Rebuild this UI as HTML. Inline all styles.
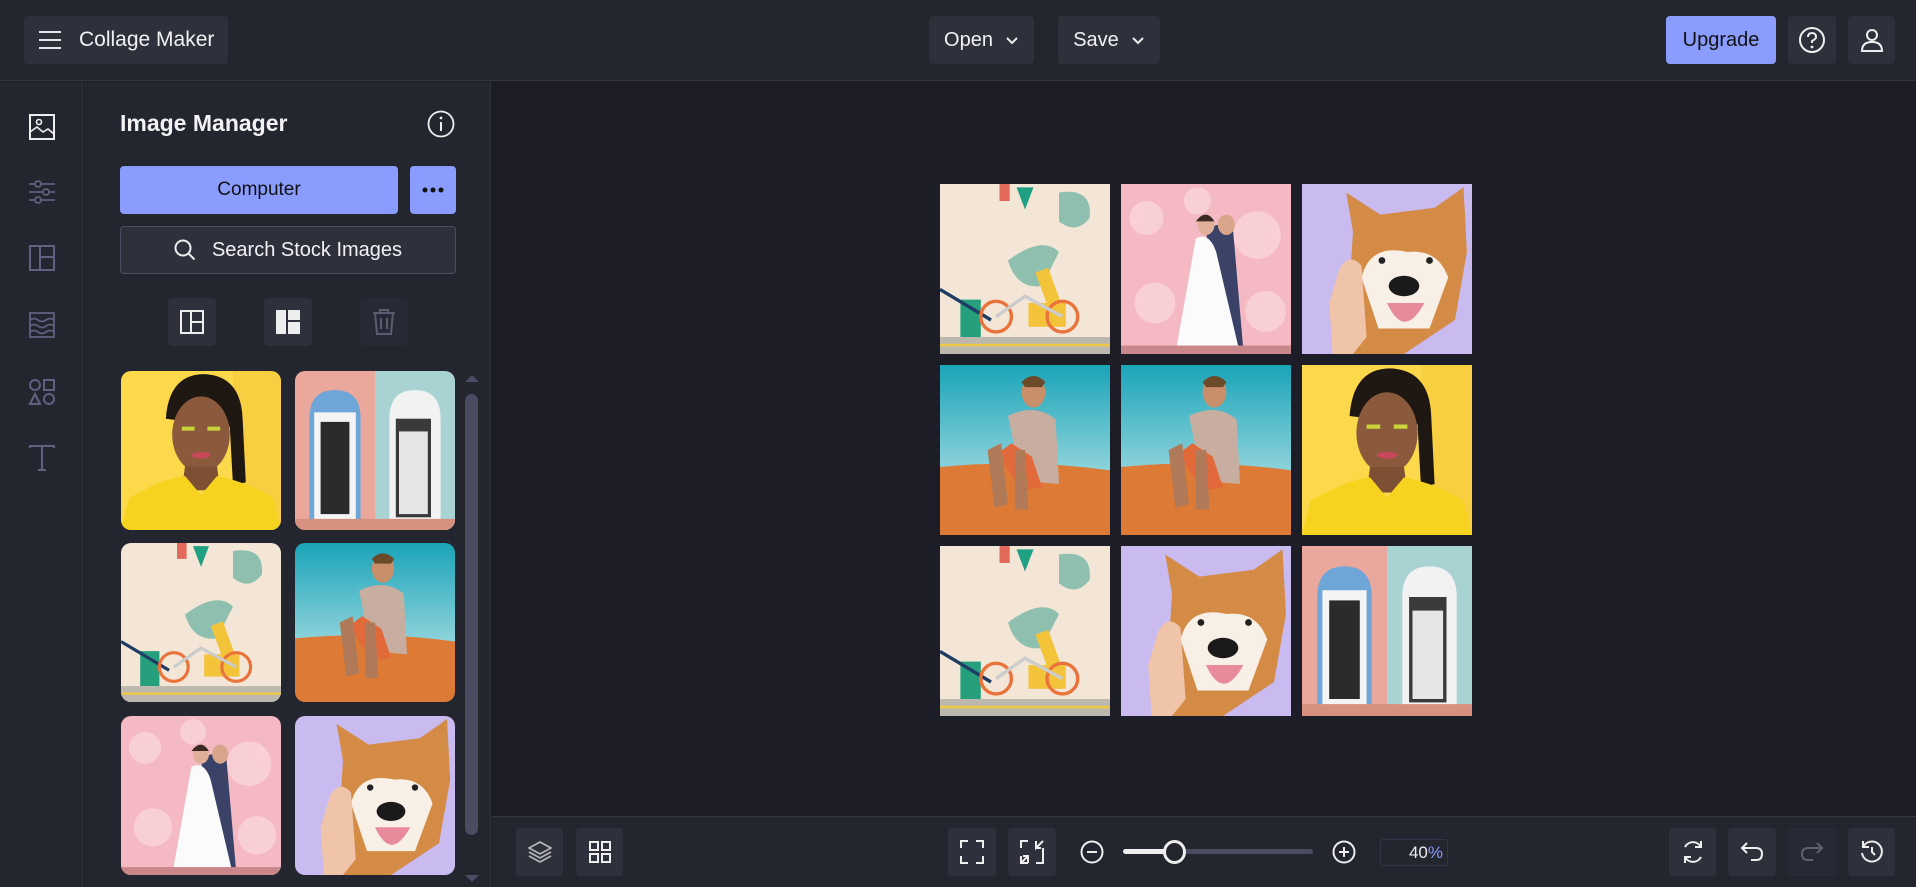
<!DOCTYPE html>
<html><head><meta charset="utf-8">
<style>
*{box-sizing:border-box;margin:0;padding:0}
body{width:1916px;height:887px;background:#1c1d26;font-family:"Liberation Sans",sans-serif;color:#fff;position:relative;overflow:hidden}
.abs{position:absolute}
.top{left:0;top:0;width:1916px;height:81px;background:#23252f;border-bottom:1px solid #343644}
.btn{position:absolute;background:#2e303c;border-radius:4px;display:flex;align-items:center;justify-content:center;font-size:20px;color:#f2f2f5}
.rail{left:0;top:82px;width:83px;height:805px;background:#23252f;border-right:1px solid #30323e}
.panel{left:84px;top:82px;width:407px;height:805px;background:#23252f;border-right:1px solid #30323e}
.bottom{left:492px;top:816px;width:1424px;height:71px;background:#23252f;border-top:1px solid #343644}
svg{display:block}
.cell{position:absolute;width:170px;height:170px}
.th{position:absolute;width:160px;height:159px;border-radius:10px;overflow:hidden}
</style></head><body>
<svg width="0" height="0" style="position:absolute">
<defs>
<symbol id="woman" viewBox="0 0 100 100" preserveAspectRatio="none">
<rect width="100" height="100" fill="#fbd94a"/><rect x="70" width="30" height="100" fill="#f7c83a" opacity=".6"/>
<path d="M28 30 Q30 2 52 2 Q75 3 76 30 L78 70 L70 72 L68 35Z" fill="#1f1712"/>
<ellipse cx="50" cy="40" rx="18" ry="24" fill="#8b5a3c"/>
<path d="M40 60 L60 60 L62 75 L38 75Z" fill="#7d4f33"/>
<path d="M0 100 L5 80 Q25 68 40 66 L50 78 L60 66 Q80 70 95 80 L100 100Z" fill="#f6d31e"/>
<ellipse cx="50" cy="53" rx="6" ry="2" fill="#c8485a"/>
<rect x="38" y="35" width="8" height="2.5" fill="#c9d43a"/><rect x="54" y="35" width="8" height="2.5" fill="#c9d43a"/>
</symbol>
<symbol id="doors" viewBox="0 0 100 100" preserveAspectRatio="none">
<rect width="50" height="100" fill="#eaa79c"/><rect x="50" width="50" height="100" fill="#a9d3d3"/>
<path d="M9 95 V30 Q9 12 25 12 Q41 12 41 30 V95Z" fill="#6ea6d8"/>
<rect x="12" y="26" width="26" height="68" fill="#f4f4f4"/><rect x="16" y="32" width="18" height="58" fill="#2b2b2b"/>
<path d="M59 95 V30 Q59 12 75 12 Q91 12 91 30 V95Z" fill="#f2f2f2"/>
<rect x="63" y="30" width="22" height="62" fill="#3a3a3a"/><rect x="65" y="38" width="18" height="52" fill="#e6e6e6"/>
<rect y="93" width="100" height="7" fill="#d9917f"/>
</symbol>
<symbol id="wall" viewBox="0 0 100 100" preserveAspectRatio="none">
<rect width="100" height="100" fill="#f3e6d6"/>
<path d="M70 5 Q90 2 88 20 Q80 30 70 22Z" fill="#8fbfae"/>
<path d="M40 45 Q60 30 70 40 L60 60 Q45 62 40 45Z" fill="#8fbfae"/>
<rect x="60" y="50" width="8" height="25" fill="#f3c33a" transform="rotate(-20 64 62)"/>
<rect x="52" y="70" width="22" height="14" fill="#f3c33a"/>
<rect x="12" y="68" width="12" height="22" fill="#26a07c"/>
<path d="M0 62 L30 80" stroke="#1e3c66" stroke-width="2"/>
<path d="M45 2 L55 2 L50 15Z" fill="#20a083"/><rect x="35" y="0" width="6" height="10" fill="#e36a5b"/>
<circle cx="33" cy="78" r="9" fill="none" stroke="#e9733a" stroke-width="2"/><circle cx="72" cy="78" r="9" fill="none" stroke="#e9733a" stroke-width="2"/>
<path d="M33 78 L50 66 L72 78" stroke="#ccc" stroke-width="2" fill="none"/>
<rect y="90" width="100" height="10" fill="#bdb8ad"/><rect y="94" width="100" height="1.5" fill="#efc845"/>
</symbol>
<symbol id="man" viewBox="0 0 100 100" preserveAspectRatio="none">
<defs><linearGradient id="sky" x1="0" y1="0" x2="0" y2="1"><stop offset="0" stop-color="#1aa4b8"/><stop offset="1" stop-color="#8ed3db"/></linearGradient></defs>
<rect width="100" height="62" fill="url(#sky)"/>
<path d="M0 60 Q50 55 100 62 V100 H0Z" fill="#dd7a36"/>
<ellipse cx="55" cy="16" rx="7" ry="9" fill="#c98f6a"/><path d="M48 10 Q55 3 62 10 L60 13 L50 13Z" fill="#6b4a2a"/>
<path d="M40 30 Q56 22 68 32 L70 70 L48 68Z" fill="#c8aea0"/>
<path d="M34 52 L42 46 L54 54 L60 72 L48 74 L40 62Z" fill="#e2693a"/>
<path d="M28 50 L36 46 L40 82 L32 84Z" fill="#b07a58"/><path d="M44 50 L50 50 L52 85 L44 85Z" fill="#b07a58"/>
</symbol>
<symbol id="wedding" viewBox="0 0 100 100" preserveAspectRatio="none">
<rect width="100" height="100" fill="#f5b9c3"/>
<g fill="#fbd5db" opacity=".8"><circle cx="15" cy="20" r="10"/><circle cx="80" cy="30" r="14"/><circle cx="20" cy="70" r="12"/><circle cx="85" cy="75" r="12"/><circle cx="45" cy="10" r="8"/></g>
<path d="M50 28 Q58 20 66 28 L72 98 L62 98Z" fill="#3a4268"/>
<ellipse cx="62" cy="24" rx="5" ry="6" fill="#d9a58a"/>
<path d="M44 32 Q52 28 56 40 L70 100 H32Z" fill="#fbfbfb"/>
<ellipse cx="50" cy="24" rx="5" ry="6" fill="#e0b09b"/><path d="M44 22 Q50 14 55 22Z" fill="#3b2a22"/>
<rect y="95" width="100" height="5" fill="#c9878c"/>
</symbol>
<symbol id="dog" viewBox="0 0 100 100" preserveAspectRatio="none">
<rect width="100" height="100" fill="#c9baf0"/>
<path d="M30 28 L26 5 L46 18 L78 14 L95 2 L97 40 L90 80 L60 100 L30 100 L28 60Z" fill="#d48b45"/>
<path d="M35 55 Q40 35 62 40 Q80 38 86 55 L75 85 L45 85Z" fill="#f8efe6"/>
<ellipse cx="60" cy="60" rx="9" ry="6" fill="#1a1a1a"/>
<path d="M50 70 Q60 92 72 70Z" fill="#e78a9a"/>
<circle cx="47" cy="45" r="2" fill="#222"/><circle cx="75" cy="45" r="2" fill="#222"/>
<path d="M22 50 Q28 40 35 48 L38 90 L30 100 L18 100 L16 70Z" fill="#f0c4a8"/>
</symbol>
</defs></svg>

<div class="abs top"></div>
<div class="btn" style="left:24px;top:16px;width:204px;height:48px;justify-content:flex-start;padding-left:14px">
<svg width="24" height="20" viewBox="0 0 24 20"><path d="M1 2H23M1 10H23M1 18H23" stroke="#e6e6ea" stroke-width="2"/></svg>
<span style="margin-left:17px;font-size:21px">Collage Maker</span></div>
<div class="btn" style="left:929px;top:16px;width:105px;height:48px">Open<svg style="margin-left:12px" width="14" height="9" viewBox="0 0 14 9"><path d="M2 2L7 7L12 2" stroke="#eee" stroke-width="2" fill="none"/></svg></div>
<div class="btn" style="left:1058px;top:16px;width:102px;height:48px">Save<svg style="margin-left:12px" width="14" height="9" viewBox="0 0 14 9"><path d="M2 2L7 7L12 2" stroke="#eee" stroke-width="2" fill="none"/></svg></div>
<div class="btn" style="left:1666px;top:16px;width:110px;height:48px;background:#8b9cff;color:#111">Upgrade</div>
<div class="btn" style="left:1788px;top:16px;width:48px;height:48px"><svg width="28" height="28" viewBox="0 0 28 28"><circle cx="14" cy="14" r="12" stroke="#eee" stroke-width="2" fill="none"/><path d="M10 11Q10 7 14 7Q18 7 18 11Q18 13 14 15V17" stroke="#eee" stroke-width="2" fill="none"/><circle cx="14" cy="21" r="1.4" fill="#eee"/></svg></div>
<div class="btn" style="left:1848px;top:16px;width:47px;height:48px"><svg width="26" height="26" viewBox="0 0 26 26"><circle cx="13" cy="8" r="5" stroke="#eee" stroke-width="2" fill="none"/><path d="M3 24Q3 15 13 15Q23 15 23 24Z" stroke="#eee" stroke-width="2" fill="none"/></svg></div>

<div class="abs rail"></div>
<svg class="abs" style="left:29px;top:114px" width="26" height="26" viewBox="0 0 26 26"><rect x="1" y="1" width="24" height="24" stroke="#eee" stroke-width="2" fill="none"/><circle cx="10" cy="8" r="2.5" stroke="#eee" stroke-width="1.6" fill="none"/><path d="M1 18L8 13L14 18L19 15L25 20" stroke="#eee" stroke-width="1.6" fill="none"/></svg>
<svg class="abs" style="left:29px;top:179px" width="26" height="26" viewBox="0 0 26 26" stroke="#5f6180" stroke-width="1.8" fill="none"><path d="M0 5H26M0 13H26M0 21H26"/><circle cx="9" cy="5" r="3" fill="#23252f"/><circle cx="17" cy="13" r="3" fill="#23252f"/><circle cx="9" cy="21" r="3" fill="#23252f"/></svg>
<svg class="abs" style="left:29px;top:245px" width="26" height="26" viewBox="0 0 26 26" stroke="#5f6180" stroke-width="2" fill="none"><rect x="1" y="1" width="24" height="24"/><path d="M11 1V25M11 12H25"/></svg>
<svg class="abs" style="left:29px;top:312px" width="26" height="26" viewBox="0 0 26 26" stroke="#5f6180" stroke-width="1.8" fill="none"><rect x="1" y="1" width="24" height="24"/><path d="M1 8Q5 5 9 8T17 8T25 8M1 14Q5 11 9 14T17 14T25 14M1 20Q5 17 9 20T17 20T25 20"/></svg>
<svg class="abs" style="left:28px;top:378px" width="28" height="28" viewBox="0 0 28 28" stroke="#5f6180" stroke-width="2" fill="none"><circle cx="7" cy="7" r="5"/><rect x="16" y="2" width="10" height="10"/><path d="M7 16L12 26H2Z"/><circle cx="21" cy="21" r="5"/></svg>
<svg class="abs" style="left:29px;top:445px" width="26" height="26" viewBox="0 0 26 26" stroke="#5f6180" stroke-width="2" fill="none"><path d="M1 3V1H25V3M13 1V25M9 25H17"/></svg>

<div class="abs panel"></div>
<div class="abs" style="left:120px;top:110px;font-size:23px;font-weight:bold;color:#f2f2f5">Image Manager</div>
<svg class="abs" style="left:427px;top:110px" width="28" height="28" viewBox="0 0 28 28"><circle cx="14" cy="14" r="12.5" stroke="#eee" stroke-width="1.8" fill="none"/><path d="M14 12V21" stroke="#eee" stroke-width="2"/><circle cx="14" cy="8" r="1.4" fill="#eee"/></svg>
<div class="btn" style="left:120px;top:166px;width:278px;height:48px;background:#8b9cff;color:#111;font-size:19px">Computer</div>
<div class="btn" style="left:410px;top:166px;width:46px;height:48px;background:#8b9cff"><svg width="22" height="6"><circle cx="3" cy="3" r="2.5" fill="#111"/><circle cx="11" cy="3" r="2.5" fill="#111"/><circle cx="19" cy="3" r="2.5" fill="#111"/></svg></div>
<div class="btn" style="left:120px;top:226px;width:336px;height:48px;border:1px solid #4a4c62;font-size:20px"><svg width="22" height="22" viewBox="0 0 22 22" style="margin-right:16px"><circle cx="9" cy="9" r="7.5" stroke="#eee" stroke-width="2" fill="none"/><path d="M14.5 14.5L20.5 20.5" stroke="#eee" stroke-width="2"/></svg>Search Stock Images</div>
<div class="btn" style="left:168px;top:298px;width:48px;height:48px"><svg width="24" height="24" viewBox="0 0 24 24" stroke="#eee" stroke-width="2" fill="none"><rect x="1" y="1" width="22" height="22"/><path d="M11 1V23M11 12H23"/></svg></div>
<div class="btn" style="left:264px;top:298px;width:48px;height:48px"><svg width="24" height="24" viewBox="0 0 24 24" fill="#eee"><rect x="0" y="0" width="10" height="24"/><rect x="12" y="0" width="12" height="10"/><rect x="12" y="12" width="12" height="12"/></svg></div>
<div class="btn" style="left:360px;top:298px;width:48px;height:48px;background:#272935"><svg width="24" height="28" viewBox="0 0 24 28" stroke="#5a5c70" stroke-width="2" fill="none"><path d="M1 5H23M8 5V2H16V5M3 5L5 26H19L21 5M9 10V21M15 10V21"/></svg></div>

<div class="th" style="left:121px;top:371px"><svg width="160" height="159"><use href="#woman"/></svg></div>
<div class="th" style="left:295px;top:371px"><svg width="160" height="159"><use href="#doors"/></svg></div>
<div class="th" style="left:121px;top:543px"><svg width="160" height="159"><use href="#wall"/></svg></div>
<div class="th" style="left:295px;top:543px"><svg width="160" height="159"><use href="#man"/></svg></div>
<div class="th" style="left:121px;top:716px"><svg width="160" height="159"><use href="#wedding"/></svg></div>
<div class="th" style="left:295px;top:716px"><svg width="160" height="159"><use href="#dog"/></svg></div>
<svg class="abs" style="left:464px;top:374px" width="16" height="9"><path d="M1 8L8 1L15 8Z" fill="#4a4c62"/></svg>
<div class="abs" style="left:465px;top:394px;width:13px;height:441px;border-radius:7px;background:#4a4c62"></div>
<svg class="abs" style="left:464px;top:874px" width="16" height="9"><path d="M1 1L8 8L15 1Z" fill="#4a4c62"/></svg>

<div class="cell" style="left:940px;top:184px"><svg width="170" height="170"><use href="#wall"/></svg></div>
<div class="cell" style="left:1121px;top:184px"><svg width="170" height="170"><use href="#wedding"/></svg></div>
<div class="cell" style="left:1302px;top:184px"><svg width="170" height="170"><use href="#dog"/></svg></div>
<div class="cell" style="left:940px;top:365px"><svg width="170" height="170"><use href="#man"/></svg></div>
<div class="cell" style="left:1121px;top:365px"><svg width="170" height="170"><use href="#man"/></svg></div>
<div class="cell" style="left:1302px;top:365px"><svg width="170" height="170"><use href="#woman"/></svg></div>
<div class="cell" style="left:940px;top:546px"><svg width="170" height="170"><use href="#wall"/></svg></div>
<div class="cell" style="left:1121px;top:546px"><svg width="170" height="170"><use href="#dog"/></svg></div>
<div class="cell" style="left:1302px;top:546px"><svg width="170" height="170"><use href="#doors"/></svg></div>

<div class="abs bottom"></div>
<div class="btn" style="left:516px;top:828px;width:47px;height:48px"><svg width="26" height="26" viewBox="0 0 26 26" stroke="#bbb" stroke-width="1.6" fill="none"><path d="M13 3L24 9L13 15L2 9Z"/><path d="M2 13L13 19L24 13M2 17L13 23L24 17"/></svg></div>
<div class="btn" style="left:576px;top:828px;width:47px;height:48px"><svg width="24" height="24" viewBox="0 0 24 24" stroke="#eee" stroke-width="2" fill="none"><rect x="2" y="2" width="8" height="8"/><rect x="14" y="2" width="8" height="8"/><rect x="2" y="14" width="8" height="8"/><rect x="14" y="14" width="8" height="8"/></svg></div>
<div class="btn" style="left:948px;top:828px;width:48px;height:48px"><svg width="24" height="24" viewBox="0 0 24 24" stroke="#eee" stroke-width="2" fill="none"><path d="M1 8V1H8M16 1H23V8M23 16V23H16M8 23H1V16"/></svg></div>
<div class="btn" style="left:1008px;top:828px;width:48px;height:48px"><svg width="24" height="24" viewBox="0 0 24 24" stroke="#eee" stroke-width="2" fill="none"><path d="M1 8V1H8M23 8V23H16M8 23H1V16M16 1L16 8L23 1M16 8H21M8 23V16H3M8 16L1 23"/></svg></div>
<svg class="abs" style="left:1080px;top:840px" width="24" height="24" viewBox="0 0 24 24" stroke="#eee" stroke-width="2" fill="none"><circle cx="12" cy="12" r="10.5"/><path d="M7 12H17"/></svg>
<div class="abs" style="left:1123px;top:849px;width:190px;height:5px;background:#4a4c62;border-radius:3px"></div>
<div class="abs" style="left:1123px;top:849px;width:50px;height:5px;background:#eee;border-radius:3px"></div>
<div class="abs" style="left:1163px;top:840px;width:23px;height:24px;border-radius:50%;background:#23252f;border:3px solid #eee"></div>
<svg class="abs" style="left:1332px;top:840px" width="24" height="24" viewBox="0 0 24 24" stroke="#eee" stroke-width="2" fill="none"><circle cx="12" cy="12" r="10.5"/><path d="M7 12H17M12 7V17"/></svg>
<div class="abs" style="left:1380px;top:839px;width:68px;height:27px;border:1px solid #33354a;border-radius:3px;font-size:17px;text-align:right;padding:3px 4px;color:#eee">40<span style="color:#8b9cff">%</span></div>
<div class="btn" style="left:1669px;top:828px;width:47px;height:48px"><svg width="24" height="26" viewBox="0 0 24 26" stroke="#eee" stroke-width="2" fill="none"><path d="M4 8A9 9 0 0 1 20 8M20 18A9 9 0 0 1 4 18M20 2V8H14M4 24V18H10"/></svg></div>
<div class="btn" style="left:1728px;top:828px;width:48px;height:48px"><svg width="26" height="24" viewBox="0 0 26 24" stroke="#eee" stroke-width="2" fill="none"><path d="M8 3L3 8L8 13M3 8H17Q23 8 23 14Q23 20 17 20H12"/></svg></div>
<div class="btn" style="left:1788px;top:828px;width:48px;height:48px;background:#272935"><svg width="26" height="24" viewBox="0 0 26 24" stroke="#5f6170" stroke-width="2" fill="none"><path d="M18 3L23 8L18 13M23 8H9Q3 8 3 14Q3 20 9 20H14"/></svg></div>
<div class="btn" style="left:1848px;top:828px;width:47px;height:48px"><svg width="26" height="26" viewBox="0 0 26 26" stroke="#eee" stroke-width="2" fill="none"><path d="M4 8A10 10 0 1 1 3 14M4 2V8H10M13 8V13L16 16"/></svg></div>
</body></html>
